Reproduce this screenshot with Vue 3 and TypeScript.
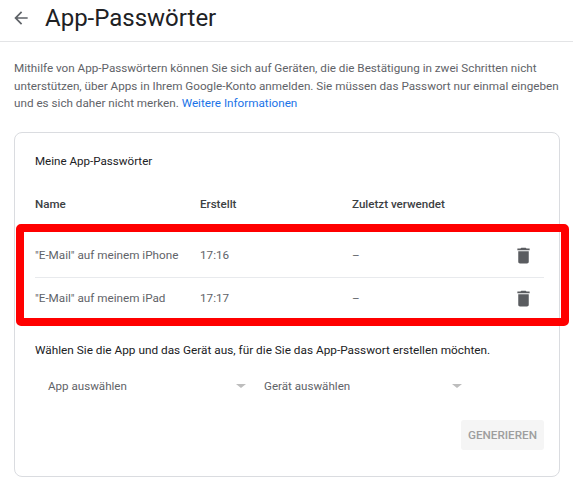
<script setup lang="ts">
const rows = [
  { name: '"E-Mail" auf meinem iPhone', created: '17:16', used: '–' },
  { name: '"E-Mail" auf meinem iPad', created: '17:17', used: '–' },
]
</script>

<template>
  <div class="page">
    <header class="topbar">
      <svg class="back" width="20" height="20" viewBox="0 0 24 24">
        <path d="M20 11H7.83l5.59-5.59L12 4l-8 8 8 8 1.41-1.41L7.83 13H20v-2z" fill="#5f6368" />
      </svg>
      <h1>App-Passwörter</h1>
    </header>

    <p class="intro">
      Mithilfe von App-Passwörtern können Sie sich auf Geräten, die die Bestätigung in zwei Schritten nicht
      unterstützen, über Apps in Ihrem Google-Konto anmelden. Sie müssen das Passwort nur einmal eingeben
      und es sich daher nicht merken.
      <a class="link">Weitere Informationen</a>
    </p>

    <section class="card">
      <h2>Meine App-Passwörter</h2>

      <div class="row head">
        <span>Name</span>
        <span>Erstellt</span>
        <span>Zuletzt verwendet</span>
      </div>

      <div class="list">
        <div v-for="r in rows" :key="r.name" class="row item">
          <span>{{ r.name }}</span>
          <span>{{ r.created }}</span>
          <span>{{ r.used }}</span>
          <svg class="trash" width="21" height="21" viewBox="0 0 24 24">
            <path d="M6 19c0 1.1.9 2 2 2h8c1.1 0 2-.9 2-2V7H6v12zM19 4h-3.5l-1-1h-5l-1 1H5v2h14V4z" fill="#5a5c60" />
          </svg>
        </div>
      </div>

      <p class="choose">Wählen Sie die App und das Gerät aus, für die Sie das App-Passwort erstellen möchten.</p>

      <div class="selects">
        <div class="select">
          <span>App auswählen</span>
          <i class="caret"></i>
        </div>
        <div class="select">
          <span>Gerät auswählen</span>
          <i class="caret"></i>
        </div>
      </div>

      <div class="actions">
        <button class="generate" disabled>GENERIEREN</button>
      </div>
    </section>

    <div class="highlight"></div>
  </div>
</template>

<style>
html,
body {
  margin: 0;
  background: #fff;
}
</style>

<style scoped>
.page {
  position: relative;
  width: 573px;
  height: 484px;
  overflow: hidden;
  font-family: Roboto, "Liberation Sans", sans-serif;
  color: #202124;
}

.topbar {
  display: flex;
  align-items: center;
  height: 35px;
  padding: 0 0 6px 11px;
  border-bottom: 1px solid #e3e4e6;
}

.back {
  margin-right: 14px;
}

h1 {
  margin: 0;
  font-size: 24px;
  font-weight: 400;
}

.intro {
  margin: 18px 0 0;
  padding: 0 10px 0 14px;
  font-size: 11.7px;
  line-height: 17.5px;
  color: #5f6368;
}

.link {
  color: #1a73e8;
}

.card {
  box-sizing: border-box;
  width: 546px;
  height: 345px;
  margin: 19px 0 0 14px;
  padding: 21px 15px 0 20px;
  border: 1px solid #dadce0;
  border-radius: 8px;
}

h2 {
  margin: 0;
  font-size: 11.6px;
  font-weight: 400;
  line-height: 14px;
}

.row {
  display: grid;
  grid-template-columns: 165px 152px 1fr 41px;
  align-items: center;
}

.head {
  margin-top: 29px;
  height: 14px;
  font-weight: 500;
  font-size: 11.6px;
  color: #3c4043;
}

.list {
  margin-top: 23px;
}

.item {
  height: 43px;
  color: #5f6368;
  font-size: 11.7px;
}

.item + .item {
  border-top: 1px solid #e8eaed;
  padding-bottom: 1px;
  box-sizing: border-box;
}

.trash {
  grid-column: 4;
  justify-self: center;
}

.choose {
  margin: 23px 0 0;
  font-size: 11.8px;
  line-height: 14px;
}

.selects {
  display: flex;
  gap: 18px;
  margin-top: 21px;
  padding-left: 13px;
}

.select {
  display: flex;
  align-items: center;
  justify-content: space-between;
  width: 198px;
  height: 16px;
  font-size: 11.6px;
  color: #5f6368;
}

.caret {
  width: 0;
  height: 0;
  border-left: 5px solid transparent;
  border-right: 5px solid transparent;
  border-top: 4px solid #bdbdbd;
}

.actions {
  display: flex;
  justify-content: flex-end;
  margin-top: 26px;
}

.generate {
  width: 83px;
  height: 30px;
  padding: 0;
  border: 0;
  border-radius: 3px;
  background: #f5f5f5;
  color: #9e9e9e;
  font-family: inherit;
  font-size: 11.7px;
  font-weight: 500;
}

/* red annotation drawn over the screenshot */
.highlight {
  position: absolute;
  left: 16px;
  top: 224px;
  box-sizing: border-box;
  width: 553px;
  height: 102px;
  border: 8px solid #ff0000;
  border-radius: 5px;
}
</style>
